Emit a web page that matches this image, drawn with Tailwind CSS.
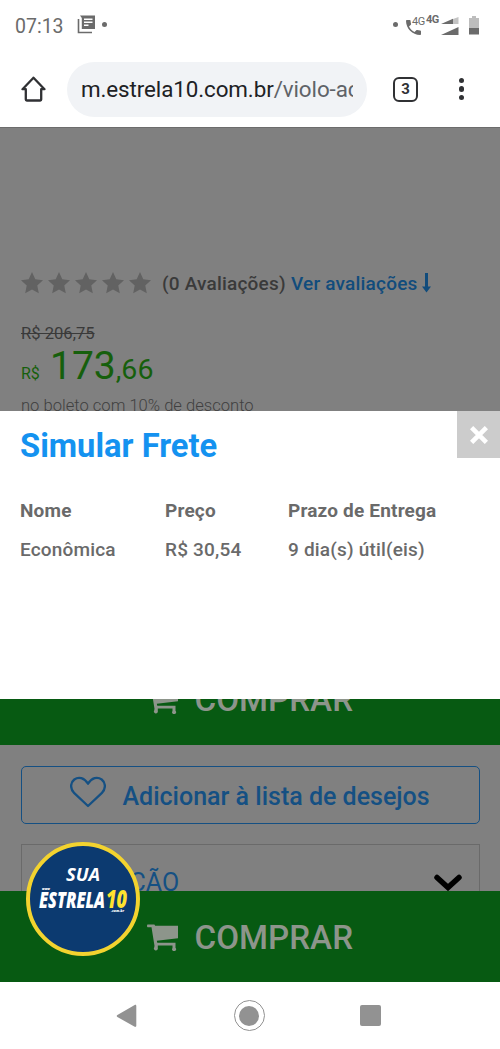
<!DOCTYPE html>
<html lang="pt-BR">
<head>
<meta charset="utf-8">
<meta name="viewport" content="width=device-width">
<title>Simular Frete</title>
<script src="https://cdn.jsdelivr.net/npm/@tailwindcss/browser@4"></script>
</head>
<body class="bg-white">
<svg class="hidden">
  <symbol id="star" viewBox="0 0 20 20"><path d="M10 0l3 6.600 7 .8-5.200 4.900 1.400 7.100L10 16l-6.200 3.400 1.400-7.100L0 7.400l7-.8z"/></symbol>
  <symbol id="cart" viewBox="0 0 32 27"><path d="M.8.500h5.900c.8 0 1.200.5 1.400 1.300H31v12.400L9.800 16.800l.5 2h18.200v5a2 2 0 1 1-3 .2v-2.600H10.800v2.600a2 2 0 1 1-3.600-.6c.2-.5.4-1.500.2-2.200L4.500 3.200H1.200C.5 3.200 0 2.600 0 1.900S.2.500.8.500z"/></symbol>
</svg>
<div class="flex h-[1049px] w-[500px] flex-col overflow-hidden font-['Roboto',sans-serif] whitespace-nowrap">

  <!-- Status bar -->
  <div class="flex h-[52px] shrink-0 items-center pl-[15px] pr-[21px] text-[#6b6b6b]">
    <span class="mt-[2px] w-[62px] text-[19.500px]">07:13</span>
    <svg class="mt-[-3px] h-5 w-[18px]" viewBox="0 0 18 20"><path d="M1.500 4v13.500H15" fill="none" stroke="#6b6b6b" stroke-width="1.600"/><path fill="#6b6b6b" fill-rule="evenodd" d="M3 .5h15V14H4.800V3zM7 3.500V5h8.500V3.500zM7 6.500V8h8.500V6.500zM7 9.500V11h4.500V9.500z"/></svg>
    <span class="mt-[-3px] ml-[7px] size-[5px] rounded-full bg-[#6b6b6b]"></span>
    <span class="mt-[-3px] ml-auto size-[5px] rounded-full bg-[#6b6b6b]"></span>
    <svg class="ml-[8px] mt-[2px] h-[15px] w-[15px]" viewBox="3 3 18 18" fill="#6b6b6b"><path d="M6.620 10.790c1.440 2.830 3.760 5.150 6.590 6.590l2.200-2.200c.28-.28.67-.36 1.020-.25 1.120.37 2.320.57 3.570.57.550 0 1 .45 1 1V20c0 .55-.45 1-1 1C10.600 21 3 13.400 3 4c0-.55.450-1 1-1h3.500c.55 0 1 .45 1 1 0 1.250.2 2.450.57 3.570.110.350.030.740-.250 1.020z"/></svg>
    <span class="-ml-[9px] mb-[8px] w-[14px] text-[11px] leading-3 tracking-[-0.5px]">4G</span>
    <span class="mb-[12px] w-[15px] text-[11px] leading-3 font-bold tracking-[-0.5px]">4G</span>
    <svg class="h-5 w-[18px]" viewBox="0 0 18 20"><path d="M12 3L17.500 1v7H12z" fill="#c3c3c3"/><path d="M0 8L12 2.800V8zM0 19L17.500 11v8z" fill="#6b6b6b"/></svg>
    <svg class="ml-[10px] mt-[-2px] h-[19px] w-[10px]" viewBox="0 0 10 19"><path d="M3 0h4v2h3v10H0V2h3z" fill="#bdbdbd"/><path d="M0 12h10v6.500H0z" fill="#6b6b6b"/></svg>
  </div>

  <!-- Browser toolbar -->
  <div class="flex h-[75px] shrink-0 items-center pl-[21px] pr-[36px]">
    <svg class="mt-[-2px] h-[26px] w-[25px]" viewBox="0 0 25 26" fill="none" stroke="#303134" stroke-width="2.300" stroke-linejoin="round"><path d="M12.500 1.700L1.500 13.200h3.300V23.500c0 .7.400 1 1 1h13.400c.6 0 1-.4 1-1V13.200h3.300z"/></svg>
    <div class="ml-[21px] mt-[-1px] flex h-[55px] w-[300px] items-center rounded-full bg-[#f1f3f6] pl-[14px]">
      <div class="w-[272px] overflow-hidden text-[22.400px] leading-[30px] tracking-[-0.1px] text-[#5f6368]"><span class="text-[#202124]">m.estrela10.com.br</span>/violo-acustico</div>
    </div>
    <div class="ml-[26px] mt-[-1px] flex size-[25px] items-center justify-center rounded-[6px] border-[2.500px] border-[#303134] text-[15px] leading-none font-bold text-[#303134]">3</div>
    <div class="mt-[-1px] ml-auto flex flex-col gap-[3px]">
      <span class="size-[5.500px] rounded-full bg-[#303134]"></span>
      <span class="size-[5.500px] rounded-full bg-[#303134]"></span>
      <span class="size-[5.500px] rounded-full bg-[#303134]"></span>
    </div>
  </div>

  <!-- Product page behind the dialog -->
  <section class="flex h-[284px] shrink-0 flex-col overflow-hidden border-t border-[#6c6c6c] bg-[#808080] pl-[21px] pt-[142px]">
    <div class="flex h-[29px] shrink-0 items-center text-[19px] font-medium text-[#3a3a3a]">
      <div class="mt-[-4px] flex w-[141px] gap-[5px] text-[#626262]">
        <svg class="h-[22px] w-[22px]" fill="currentColor"><use href="#star"/></svg>
        <svg class="h-[22px] w-[22px]" fill="currentColor"><use href="#star"/></svg>
        <svg class="h-[22px] w-[22px]" fill="currentColor"><use href="#star"/></svg>
        <svg class="h-[22px] w-[22px]" fill="currentColor"><use href="#star"/></svg>
        <svg class="h-[22px] w-[22px]" fill="currentColor"><use href="#star"/></svg>
      </div>
      <span class="w-[129px] tracking-[0.2px]">(0 Avaliações)</span>
      <span class="tracking-[0.2px] text-[#114c7c]">Ver avaliações</span>
      <svg class="ml-[4px] mt-[-3px] h-[20px] w-[9px]" viewBox="0 0 9 20" fill="#114c7c"><path d="M3 0h3v13.500h3L4.500 19.500 0 13.500h3z"/></svg>
    </div>
    <div class="mt-[23px] h-[24px] text-[16.600px] leading-[24px] text-[#3a3a3a]"><span class="line-through">R$ 206,75</span></div>
    <div class="flex h-[44px] items-baseline text-[#165f0c]">
      <span class="w-[29px] text-[16px]">R$</span>
      <span class="text-[39px] leading-[40px]">173</span><span class="text-[28.500px] leading-[40px]">,66</span>
    </div>
    <div class="mt-[4px] text-[16.600px] leading-[24px] font-light text-[#404040]">no boleto com 10% de desconto</div>
  </section>

  <!-- Shipping dialog -->
  <section class="flex h-[288px] shrink-0 flex-col bg-white pl-[20px] text-[#6a6a6a]">
    <div class="flex h-[72px] justify-between">
      <h1 class="pt-[15px] text-[32.700px] leading-[40px] font-bold text-[#1492f0]">Simular Frete</h1>
      <button class="flex h-[47px] w-[43px] items-center justify-center bg-[#cccccc]" aria-label="Fechar">
        <svg class="size-[18px]" viewBox="0 0 18 18" stroke="#fff" stroke-width="4.600"><path d="M1.600 1.600l14.800 14.800M16.400 1.600L1.600 16.400"/></svg>
      </button>
    </div>
    <div class="mt-[8px] grid grid-cols-[145px_123px_1fr] text-[19px] leading-[39px] tracking-[0.180px]">
      <span class="font-bold">Nome</span><span class="font-bold">Preço</span><span class="font-bold">Prazo de Entrega</span>
      <span class="font-medium">Econômica</span><span class="font-medium">R$ 30,54</span><span class="font-medium">9 dia(s) útil(eis)</span>
    </div>
  </section>

  <!-- Product actions -->
  <section class="flex h-[192px] shrink-0 flex-col overflow-hidden bg-[#808080]">
    <div class="flex h-[46px] shrink-0 flex-col justify-end overflow-hidden bg-[#075a12]">
      <div class="mb-[21px] flex h-[48px] shrink-0 items-center pl-[147px] text-[#8d958b]">
        <svg class="mt-[1px] h-[27px] w-[32px]" fill="currentColor"><use href="#cart"/></svg>
        <span class="ml-[15.500px] text-[33.200px] font-medium">COMPRAR</span>
      </div>
    </div>
    <div class="mx-[20.500px] mt-[21px] flex h-[58px] shrink-0 items-center rounded-[5px] border-[1.500px] border-[#155083] pl-[48px] text-[#155083]">
      <svg class="mt-[-6px] h-[32px] w-[36px]" viewBox="0 0 36 32" fill="none" stroke="currentColor" stroke-width="2.300" stroke-linejoin="round"><path d="M18 30L4.300 17.200C-.2 12.500.3 6.600 4.300 3.500c4.200-3.100 10-2 13.700 4.200C21.700 1.500 27.500.4 31.700 3.500c4 3.100 4.500 9 0 13.700z"/></svg>
      <span class="mt-[3px] ml-[17px] text-[25px] font-medium">Adicionar à lista de desejos</span>
    </div>
    <div class="mx-[20.500px] mt-[20px] flex h-[78px] shrink-0 items-center justify-between border-[1.500px] border-[#6a6a6a] pl-[24px] pr-[17px]">
      <span class="text-[25px] text-[#155083]">DESCRIÇÃO</span>
      <svg class="h-[18px] w-[28px]" viewBox="0 0 28 18" fill="none" stroke="#000" stroke-width="5.500" stroke-linecap="round"><path d="M3 3.500l11 10 11-10"/></svg>
    </div>
  </section>

  <!-- Fixed purchase bar -->
  <section class="relative flex h-[91px] shrink-0 items-center bg-[#075a12] pl-[147px] text-[#8d958b]">
    <svg class="mt-[1px] h-[27px] w-[32px]" fill="currentColor"><use href="#cart"/></svg>
    <span class="mt-[2px] ml-[15.500px] text-[33.200px] font-medium">COMPRAR</span>
    <div class="absolute left-[26px] top-[-49px] flex size-[114px] flex-col items-center rounded-full border-[4.500px] border-[#f3d32f] bg-[#0c3a70] pt-[18px] text-white">
      <span class="font-['Open_Sans',sans-serif] text-[18.500px] leading-[20px] font-bold italic">SUA</span>
      <svg class="mt-[2px] h-[28px] w-[92px]" viewBox="0 0 92 28" font-family="Open Sans, sans-serif" font-weight="800" font-style="italic">
        <text x="5" y="3.800" font-size="4" fill="#fff" textLength="8" lengthAdjust="spacingAndGlyphs">www</text>
        <text x="2" y="21.500" font-size="22" fill="#fff" textLength="66" lengthAdjust="spacingAndGlyphs">ESTRELA</text>
        <text x="69" y="21.500" font-size="25" fill="#ffe32e" textLength="21" lengthAdjust="spacingAndGlyphs">10</text>
        <text x="74" y="25.500" font-size="4" fill="#fff" textLength="13" lengthAdjust="spacingAndGlyphs">.com.br</text>
      </svg>
    </div>
  </section>

  <!-- System navigation -->
  <nav class="flex h-[67px] shrink-0 items-center justify-between bg-white pl-[116px] pr-[119px]">
    <svg class="h-[24px] w-[21px]" viewBox="0 0 21 24" fill="#929292"><path d="M18.700 1C19.500.6 20.300 1 20.300 2v19.800c0 1-.8 1.400-1.600 1L1.400 13c-.9-.5-.9-1.500 0-2z"/></svg>
    <div class="ml-[1px] flex size-[31px] items-center justify-center rounded-full border border-[#929292]"><span class="size-[20px] rounded-full bg-[#929292]"></span></div>
    <span class="size-[21px] rounded-[2px] bg-[#929292]"></span>
  </nav>
</div>
</body>
</html>
